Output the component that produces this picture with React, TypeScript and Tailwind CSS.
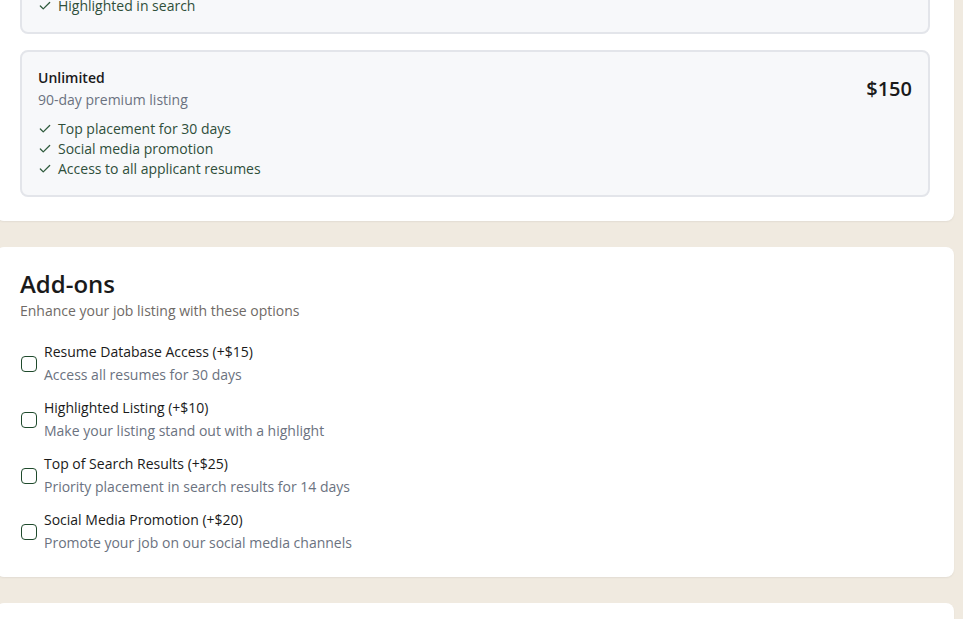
import React from "react";

const Check = () => (
  <svg width="14" height="14" viewBox="0 0 24 24" fill="none" stroke="currentColor" strokeWidth="2.2" strokeLinecap="round" strokeLinejoin="round" className="text-[#2e5a3c] shrink-0">
    <path d="M20 6 9 17l-5-5" />
  </svg>
);

const addons = [
  { title: "Resume Database Access (+$15)", desc: "Access all resumes for 30 days" },
  { title: "Highlighted Listing (+$10)", desc: "Make your listing stand out with a highlight" },
  { title: "Top of Search Results (+$25)", desc: "Priority placement in search results for 14 days" },
  { title: "Social Media Promotion (+$20)", desc: "Promote your job on our social media channels" },
];

const App = () => {
  return (
    <div
      className="h-[619px] overflow-hidden bg-[#f0eae0] text-[#1a1a1a]"
      style={{ fontFamily: '"Open Sans", "Noto Sans", sans-serif' }}
    >
      <div className="ml-[-4px] mr-[9px] mt-[-66px] flex flex-col gap-[26px]">
        {/* pricing card */}
        <div className="bg-white rounded-lg shadow-[0_1px_2px_rgba(0,0,0,0.06)] px-6 pt-6 pb-6 flex flex-col gap-4">
          <div className="rounded-lg border-2 border-[#e3e5ea] bg-[#f7f8fa] px-4 py-4">
            <div className="flex flex-col text-sm text-[#2f4f3a]">
              <div className="flex items-center gap-1.5 h-5"><Check />Featured badge</div>
              <div className="flex items-center gap-1.5 h-5"><Check />Highlighted in search</div>
            </div>
          </div>
          <div className="rounded-lg border-2 border-[#e3e5ea] bg-[#f7f8fa] px-4 py-4">
            <div className="flex items-center justify-between">
              <div>
                <div className="text-sm font-semibold leading-5">Unlimited</div>
                <div className="text-sm leading-5 mt-[2px] text-[#6b7280]">90-day premium listing</div>
              </div>
              <div className="text-xl font-semibold leading-7">$150</div>
            </div>
            <div className="mt-[9px] flex flex-col text-sm text-[#2f4f3a]">
              <div className="flex items-center gap-1.5 h-5"><Check />Top placement for 30 days</div>
              <div className="flex items-center gap-1.5 h-5"><Check />Social media promotion</div>
              <div className="flex items-center gap-1.5 h-5"><Check />Access to all applicant resumes</div>
            </div>
          </div>
        </div>

        {/* add-ons card */}
        <div className="bg-white rounded-lg shadow-[0_1px_2px_rgba(0,0,0,0.06)] px-6 pt-5 pb-6">
          <h2 className="text-2xl font-semibold leading-[34px]">Add-ons</h2>
          <p className="text-sm leading-5 text-[#6f6a66]">Enhance your job listing with these options</p>
          <div className="mt-[21px] flex flex-col gap-[13px]">
            {addons.map((a) => (
              <label key={a.title} className="flex items-center gap-[7px] cursor-pointer">
                <span className="w-4 h-4 ml-[1px] rounded-[4px] border-[1.5px] border-[#1f4a2c] bg-white shrink-0" />
                <span className="flex flex-col">
                  <span className="text-sm leading-5">{a.title}</span>
                  <span className="text-sm leading-5 mt-[3px] text-[#6b7280]">{a.desc}</span>
                </span>
              </label>
            ))}
          </div>
        </div>

        {/* next card */}
        <div className="bg-white rounded-lg shadow-[0_1px_2px_rgba(0,0,0,0.06)] h-[200px]" />
      </div>
    </div>
  );
};

export default App;
